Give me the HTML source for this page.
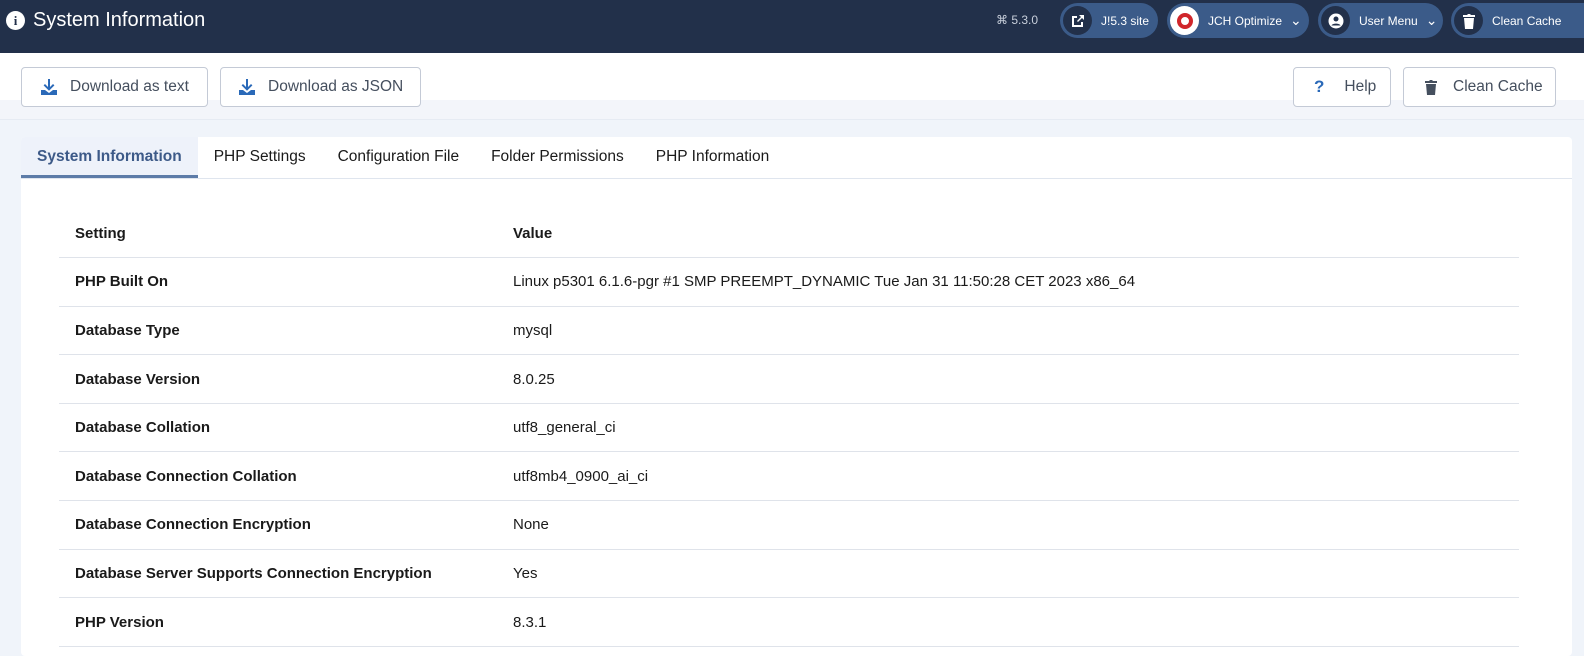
<!DOCTYPE html>
<html style="overflow:hidden;height:656px"><head><meta charset="utf-8"><style>
*{box-sizing:border-box;margin:0;padding:0}
body{width:1584px;height:656px;overflow:hidden;background:#f0f4fa;font-family:"Liberation Sans",Roboto,sans-serif;color:#1a1a1a;position:relative}
.hdr{height:53px;background:#22304a;position:relative;color:#fff}
.hdr .title{position:absolute;left:6px;top:9px;font-size:20px;display:flex;align-items:center;gap:8px}
.hdr .title .i{width:19px;height:19px;border-radius:50%;background:#fff;color:#22304a;font:bold 13px "Liberation Serif",serif;display:flex;align-items:center;justify-content:center}
.ver{position:absolute;left:996px;top:13px;font-size:12px;color:#c8cfdb}
.pill{position:absolute;top:3px;height:35px;border-radius:18px;background:#3b5b89;display:flex;align-items:center;font-size:12px;color:#fff}
.pill .ic{width:29px;height:29px;border-radius:50%;background:#22304a;margin-left:3px;margin-right:9px;display:flex;align-items:center;justify-content:center}
.tb{position:absolute;top:53px;left:0;width:1584px;height:47px;background:#fff}
.strip{position:absolute;top:100px;left:0;width:1584px;height:20px;background:#f3f5fa;border-bottom:1px solid #e6ebf3}
.btn{position:absolute;top:67px;height:40px;border:1px solid #c4cad6;border-radius:4px;background:#fff;display:flex;align-items:center;font-size:15.5px;color:#454f5e}
.card{position:absolute;left:21px;top:137px;width:1551px;height:519px;background:#fff;border-radius:4px;overflow:hidden}
.tabs{height:42px;border-bottom:1px solid #dfe5ee;display:flex;font-size:15.5px}
.tab{padding:0 16px;line-height:40px}
.tab.a{background:#eef2fa;color:#3d5a88;font-weight:bold;border-bottom:3px solid #5d7ca8}
table{position:absolute;left:38px;top:72px;width:1460px;border-collapse:collapse;font-size:15px}
td{height:48.6px;padding-left:16px;border-bottom:1px solid #dfe3ea}
td:first-child{font-weight:bold;width:438px}
tr.h td{font-weight:bold}
</style></head><body>
<div class="hdr">
<div class="title"><span class="i">i</span>System Information</div>
<div class="ver">⌘ 5.3.0</div>
<div class="pill" style="left:1060px;width:98px"><span class="ic"><svg width="16" height="16" viewBox="0 0 16 16"><path d="M2 3h5v2H4v7h7V9h2v5H2z M9 2h5v5l-2-2-4 4-1-1 4-4z" fill="#fff"/></svg></span>J!5.3 site</div>
<div class="pill" style="left:1167px;width:142px"><span class="ic" style="background:#fff"><span style="width:16px;height:16px;border-radius:50%;border:4px solid #d0262b;display:block;background:#fff"></span></span>JCH Optimize<span style="margin-left:8px;font-size:14px">⌄</span></div>
<div class="pill" style="left:1318px;width:125px"><span class="ic"><svg width="16" height="16" viewBox="0 0 16 16"><circle cx="8" cy="8" r="7.5" fill="#fff"/><circle cx="8" cy="6" r="2.5" fill="#22304a"/><path d="M3.5 12.5c1-2.5 8-2.5 9 0" fill="#22304a"/></svg></span>User Menu<span style="margin-left:8px;font-size:14px">⌄</span></div>
<div class="pill" style="left:1451px;width:133px;border-radius:18px 0 0 18px"><span class="ic"><svg width="14" height="16" viewBox="0 0 14 16"><path d="M1 2h4l1-1h2l1 1h4v2H1z M2 5h10l-1 11H3z" fill="#fff"/></svg></span>Clean Cache</div>
</div>
<div class="tb"></div><div class="strip"></div>
<div class="btn" style="left:21px;width:187px;padding-left:18px"><svg width="18" height="16" viewBox="0 0 18 16"><path d="M8 0h2v8l3-3 1.4 1.4L9 11.8 3.6 6.4 5 5l3 3z M1 11h4l4 3 4-3h4v5H1z" fill="#2a69b8"/></svg><span style="margin-left:12px">Download as text</span></div>
<div class="btn" style="left:220px;width:201px;padding-left:17px"><svg width="18" height="16" viewBox="0 0 18 16"><path d="M8 0h2v8l3-3 1.4 1.4L9 11.8 3.6 6.4 5 5l3 3z M1 11h4l4 3 4-3h4v5H1z" fill="#2a69b8"/></svg><span style="margin-left:12px">Download as JSON</span></div>
<div class="btn" style="left:1293px;width:98px;padding-left:20px"><span style="color:#2a69b8;font-weight:bold;font-size:17px">?</span><span style="margin-left:20px">Help</span></div>
<div class="btn" style="left:1403px;width:153px;padding-left:20px"><svg width="14" height="16" viewBox="0 0 14 16"><path d="M1 2h4l1-1h2l1 1h4v2H1z M2 5h10l-1 11H3z" fill="#454f5e"/></svg><span style="margin-left:15px">Clean Cache</span></div>
<div class="card">
<div class="tabs"><div class="tab a">System Information</div><div class="tab">PHP Settings</div><div class="tab">Configuration File</div><div class="tab">Folder Permissions</div><div class="tab">PHP Information</div></div>
<table>
<tr class="h"><td>Setting</td><td>Value</td></tr>
<tr><td>PHP Built On</td><td>Linux p5301 6.1.6-pgr #1 SMP PREEMPT_DYNAMIC Tue Jan 31 11:50:28 CET 2023 x86_64</td></tr>
<tr><td>Database Type</td><td>mysql</td></tr>
<tr><td>Database Version</td><td>8.0.25</td></tr>
<tr><td>Database Collation</td><td>utf8_general_ci</td></tr>
<tr><td>Database Connection Collation</td><td>utf8mb4_0900_ai_ci</td></tr>
<tr><td>Database Connection Encryption</td><td>None</td></tr>
<tr><td>Database Server Supports Connection Encryption</td><td>Yes</td></tr>
<tr><td>PHP Version</td><td>8.3.1</td></tr>
</table>
</div>
</body></html>
